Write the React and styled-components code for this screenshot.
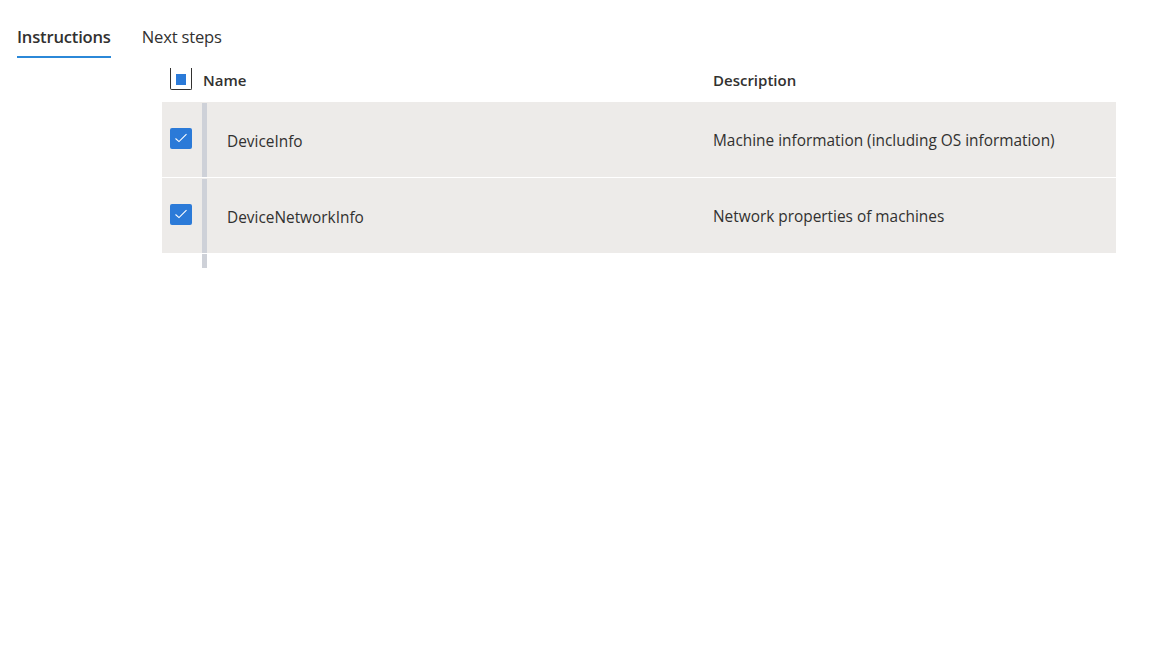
import React from 'react'
import styled, { createGlobalStyle } from 'styled-components'

const GlobalStyle = createGlobalStyle`
    html, body {
        margin: 0;
        padding: 0;
        background: #ffffff;
        font-family: "Open Sans", "Noto Sans", "Liberation Sans", sans-serif;
        color: #323130;
    }
`

const Page = styled.div`
    width: 1152px;
    height: 648px;
    background: #ffffff;
    box-sizing: border-box;
    padding-top: 24px;
`

const TabBar = styled.nav`
    display: flex;
    gap: 31px;
    padding-left: 17px;
    height: 34px;
`

const Tab = styled.div`
    font-size: 16.6px;
    font-weight: ${p => (p.active ? 600 : 400)};
    color: #323130;
    letter-spacing: -0.2px;
    line-height: 26px;
    height: 34px;
    box-sizing: border-box;
    border-bottom: 2px solid ${p => (p.active ? '#2b88d8' : 'transparent')};
`

const Table = styled.div`
    margin-left: 162px;
    width: 954px;
    margin-top: 9px;
`

const HeaderRow = styled.div`
    display: grid;
    grid-template-columns: 40px 511px 1fr;
    align-items: center;
    height: 26px;
    margin-bottom: 9px;
    font-size: 15px;
    font-weight: 600;
    color: #323130;
`

const CheckCell = styled.div`
    display: flex;
    align-items: center;
    padding-left: 8px;
`

const HeaderBox = styled.div`
    width: 22px;
    height: 22px;
    box-sizing: border-box;
    border: 1px solid #323130;
    border-top: none;
    border-radius: 0 0 2px 2px;
    display: flex;
    align-items: flex-start;
    justify-content: center;
    padding-top: 6px;
    margin-top: -3px;

    & > span {
        width: 10px;
        height: 11px;
        background: #2b7ad8;
    }
`

const HeadName = styled.div`
    padding-left: 1px;
`

const Row = styled.div`
    display: grid;
    grid-template-columns: 40px 5px 506px 1fr;
    align-items: center;
    height: 75px;
    background: #edebe9;
    margin-bottom: 1px;
    font-size: 15.4px;
    color: #323130;
`

const Bar = styled.div`
    align-self: stretch;
    width: 5px;
    background: #ced1d8;
    margin-top: 1px;
`

const TailBar = styled.div`
    width: 5px;
    height: 14px;
    margin-left: 40px;
    margin-top: 1px;
    background: #ced1d8;
`

const CheckBox = styled.div`
    width: 22px;
    height: 21px;
    border-radius: 2px;
    background: #2b7ad8;
    display: flex;
    align-items: center;
    justify-content: center;
    margin-top: -3px;
`

const NameCell = styled.div`
    padding-left: 20px;
    margin-top: 3px;
`

const DescCell = styled.div`
    margin-top: 1px;
`

const CheckMark = () => (
    <svg width="16" height="16" viewBox="0 0 16 16">
        <path d="M2.5 8.5 L6 11.6 L13.5 4.2" fill="none" stroke="#ffffff" strokeWidth="1.1" />
    </svg>
)

const rows = [
    { id: 1, name: 'DeviceInfo', desc: 'Machine information (including OS information)' },
    { id: 2, name: 'DeviceNetworkInfo', desc: 'Network properties of machines' },
]

export default function App() {
    return (
        <>
            <GlobalStyle />
            <Page>
                <TabBar>
                    <Tab active>Instructions</Tab>
                    <Tab>Next steps</Tab>
                </TabBar>
                <Table>
                    <HeaderRow>
                        <CheckCell>
                            <HeaderBox>
                                <span />
                            </HeaderBox>
                        </CheckCell>
                        <HeadName>Name</HeadName>
                        <div>Description</div>
                    </HeaderRow>
                    {rows.map(row => (
                        <Row key={row.id}>
                            <CheckCell>
                                <CheckBox>
                                    <CheckMark />
                                </CheckBox>
                            </CheckCell>
                            <Bar />
                            <NameCell>{row.name}</NameCell>
                            <DescCell>{row.desc}</DescCell>
                        </Row>
                    ))}
                    <TailBar />
                </Table>
            </Page>
        </>
    )
}
